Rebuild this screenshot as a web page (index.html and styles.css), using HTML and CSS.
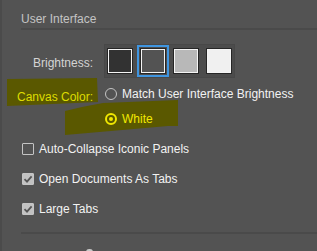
FILE: index.html
```html
<!DOCTYPE html>
<html>
<head>
    <title>Preferences - User Interface</title>
    <link rel="stylesheet" href="styles.css">
</head>
<body>
    <div class="prefs">
        <!-- marker highlights drawn over the screenshot -->
        <svg class="marks" width="317" height="251" viewBox="0 0 317 251">
            <polygon points="7,79 97,78 98,102 7,106" fill="#5a5800"/>
            <polygon points="65,111 82,107 103,103 178,100 178,126 168,126 65,135" fill="#5a5800"/>
        </svg>

        <div class="section-title">User Interface</div>

        <div class="field brightness-field">
            <span class="field-label">Brightness:</span>
            <div class="swatches">
                <span class="swatch swatch-dark"></span>
                <span class="swatch swatch-medium selected"></span>
                <span class="swatch swatch-light"></span>
                <span class="swatch swatch-white"></span>
            </div>
        </div>

        <div class="field canvas-field">
            <span class="field-label canvas-label">Canvas Color:</span>
            <div class="radio-group">
                <label class="radio"><span class="radio-dot"></span>Match User Interface Brightness</label>
                <label class="radio checked"><span class="radio-dot"></span>White</label>
            </div>
        </div>

        <div class="checks">
            <label class="check"><span class="box"></span>Auto-Collapse Iconic Panels</label>
            <label class="check checked">
                <span class="box"><svg width="10" height="10" viewBox="0 0 10 10"><path d="M1.5 5.2 L4 7.6 L8.6 2.4" fill="none" stroke="#555" stroke-width="1.8"/></svg></span>
                Open Documents As Tabs
            </label>
            <label class="check checked">
                <span class="box"><svg width="10" height="10" viewBox="0 0 10 10"><path d="M1.5 5.2 L4 7.6 L8.6 2.4" fill="none" stroke="#555" stroke-width="1.8"/></svg></span>
                Large Tabs
            </label>
        </div>

        <div class="divider"></div>
        <div class="next-row"><span class="knob"></span></div>
    </div>
</body>
</html>
```

FILE: styles.css
```css
body {
    margin: 0;
    padding: 0;
    background-color: #535353;
    font-family: "Liberation Sans", Arial, sans-serif;
    font-size: 12px;
    color: #d4d4d4;
    overflow: hidden;
    height: 251px;
}
.prefs {
    position: relative;
    border-left: 2px solid #4b4b4b;
    padding-left: 19px;
    height: 251px;
    box-sizing: border-box;
}
.marks {
    position: absolute;
    left: -2px;
    top: 0;
    z-index: 0;
}
.section-title,
.field,
.checks,
.divider,
.next-row {
    position: relative;
    z-index: 1;
}
.section-title {
    padding-top: 11px;
    line-height: 17px;
    color: #c4c4c4;
    border-bottom: 2px solid #4a4a4a;
}
.field {
    display: flex;
    gap: 11px;
}
.field-label {
    width: 72px;
    flex-shrink: 0;
    display: flex;
    justify-content: flex-end;
    white-space: nowrap;
}
.brightness-field {
    margin-top: 14px;
    align-items: center;
}
.brightness-field .field-label {
    padding-top: 4px;
}
.swatches {
    display: flex;
    gap: 7px;
    padding: 3px 2px 3px 2px;
    background-color: #4c4c4c;
    border: 1px solid #484848;
}
.swatch {
    width: 24px;
    height: 24px;
    border: 1px solid #262626;
    box-shadow: inset 0 0 0 1px #f4f4f4;
}
.swatch-dark {
    background-color: #323232;
}
.swatch-medium {
    background-color: #535353;
}
.swatch-light {
    background-color: #b8b8b8;
}
.swatch-white {
    background-color: #f0f0f0;
}
.swatch.selected {
    outline: 2px solid #3f95e0;
    outline-offset: 1px;
}
.canvas-field {
    margin-top: 8px;
}
.canvas-label {
    color: #dedc00;
    padding-top: 3px;
    line-height: 16px;
}
.radio-group {
    display: flex;
    flex-direction: column;
    gap: 9px;
    margin-left: 1px;
}
.radio {
    display: flex;
    align-items: center;
    line-height: 16px;
    color: #f2f2f2;
}
.radio-dot {
    width: 12px;
    height: 12px;
    box-sizing: border-box;
    border: 1px solid #c4c4c4;
    border-radius: 50%;
    margin-right: 5px;
    display: flex;
    align-items: center;
    justify-content: center;
}
.radio.checked {
    color: #f0e800;
}
.radio.checked .radio-dot {
    border: 2px solid #f0e800;
}
.radio.checked .radio-dot::after {
    content: "";
    width: 4px;
    height: 4px;
    border-radius: 50%;
    background-color: #f0e800;
}
.checks {
    margin-top: 14px;
    display: flex;
    flex-direction: column;
    gap: 14px;
}
.check {
    display: flex;
    align-items: center;
    line-height: 16px;
    color: #f2f2f2;
}
.box {
    width: 12px;
    height: 12px;
    box-sizing: border-box;
    border: 1px solid #c4c4c4;
    border-radius: 1px;
    margin-left: 1px;
    margin-right: 5px;
    display: flex;
    align-items: center;
    justify-content: center;
}
.check.checked .box {
    background-color: #c2c2c2;
}
.divider {
    margin-top: 15px;
    height: 2px;
    background-color: #4a4a4a;
}
.next-row {
    margin-top: 15px;
    padding-left: 65px;
}
.knob {
    display: block;
    width: 7px;
    height: 7px;
    border-radius: 3px 3px 0 0;
    background-color: #c8c8c8;
}
```
